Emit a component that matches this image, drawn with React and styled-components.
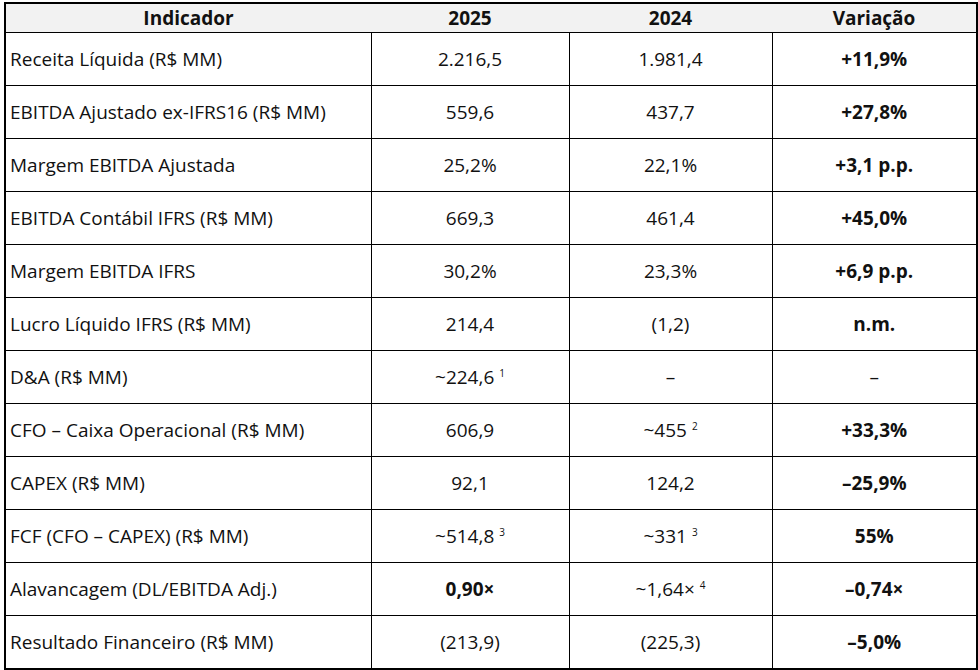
import React from 'react';
import styled, { createGlobalStyle } from 'styled-components';

const GlobalStyle = createGlobalStyle`
	body {
		margin: 0;
		background: #ffffff;
		font-family: 'Open Sans', 'Noto Sans', sans-serif;
		color: #111111;
	}
`;

const Page = styled.div`
	padding: 2px 2px 0 4px;
`;

const Table = styled.table`
	width: 972px;
	border-collapse: collapse;
	table-layout: fixed;
	border: 2px solid #000;
	font-size: 19px;
`;

const HeadCell = styled.th`
	height: 28px;
	padding: 0;
	background: #f2f2f2;
	border-bottom: 1px solid #000;
	font-weight: 700;
	text-align: center;
	vertical-align: middle;
	line-height: 1;
`;

const Cell = styled.td`
	height: 52px;
	padding: 0 0 0 ${(p) => (p.$label ? '4px' : '0')};
	border: 1px solid #000;
	text-align: ${(p) => (p.$label ? 'left' : 'center')};
	font-weight: ${(p) => (p.$bold ? 700 : 400)};
	vertical-align: middle;
	white-space: nowrap;
	line-height: 1.2;
`;

const Sup = styled.sup`
	font-size: 10px;
	margin-left: 5px;
	vertical-align: 7px;
	line-height: 0;
`;

const Val = ({ v, n }) => (
	<>
		{v}
		{n && <Sup>{n}</Sup>}
	</>
);

const rows = [
	['Receita Líquida (R$ MM)', ['2.216,5'], ['1.981,4'], '+11,9%'],
	['EBITDA Ajustado ex-IFRS16 (R$ MM)', ['559,6'], ['437,7'], '+27,8%'],
	['Margem EBITDA Ajustada', ['25,2%'], ['22,1%'], '+3,1 p.p.'],
	['EBITDA Contábil IFRS (R$ MM)', ['669,3'], ['461,4'], '+45,0%'],
	['Margem EBITDA IFRS', ['30,2%'], ['23,3%'], '+6,9 p.p.'],
	['Lucro Líquido IFRS (R$ MM)', ['214,4'], ['(1,2)'], 'n.m.'],
	['D&A (R$ MM)', ['~224,6', '1'], ['–'], '–', true],
	['CFO – Caixa Operacional (R$ MM)', ['606,9'], ['~455', '2'], '+33,3%'],
	['CAPEX (R$ MM)', ['92,1'], ['124,2'], '–25,9%'],
	['FCF (CFO – CAPEX) (R$ MM)', ['~514,8', '3'], ['~331', '3'], '55%'],
	['Alavancagem (DL/EBITDA Adj.)', ['0,90×', null, true], ['~1,64×', '4'], '–0,74×'],
	['Resultado Financeiro (R$ MM)', ['(213,9)'], ['(225,3)'], '–5,0%'],
];

export default function App() {
	return (
		<Page>
			<GlobalStyle />
			<Table>
				<colgroup>
					<col style={{ width: 366 }} />
					<col style={{ width: 198 }} />
					<col style={{ width: 203 }} />
					<col style={{ width: 205 }} />
				</colgroup>
				<thead>
					<tr>
						<HeadCell>Indicador</HeadCell>
						<HeadCell>2025</HeadCell>
						<HeadCell>2024</HeadCell>
						<HeadCell>Variação</HeadCell>
					</tr>
				</thead>
				<tbody>
					{rows.map(([label, a, b, change, plain]) => (
						<tr key={label}>
							<Cell $label>{label}</Cell>
							<Cell $bold={a[2]}>
								<Val v={a[0]} n={a[1]} />
							</Cell>
							<Cell>
								<Val v={b[0]} n={b[1]} />
							</Cell>
							<Cell $bold={!plain}>{change}</Cell>
						</tr>
					))}
				</tbody>
			</Table>
		</Page>
	);
}
